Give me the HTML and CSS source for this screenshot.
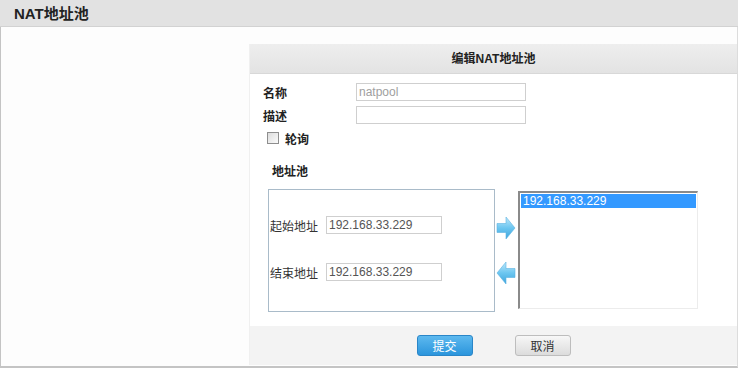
FILE: index.html
```html
<!DOCTYPE html>
<html lang="zh-CN">
<head>
  <meta charset="UTF-8">
  <title>NAT地址池</title>
  <link rel="stylesheet" href="styles.css">
</head>
<body>
  <div class="page-title">NAT地址池</div>
  <div class="content">
    <div class="panel">
      <div class="panel-head">编辑NAT地址池</div>
      <div class="panel-body">
        <div class="row">
          <label class="lbl">名称</label>
          <input class="txt" type="text" value="natpool" readonly>
        </div>
        <div class="row">
          <label class="lbl">描述</label>
          <input class="txt" type="text" value="">
        </div>
        <div class="check-row">
          <span class="checkbox"></span>
          <span class="lbl">轮询</span>
        </div>
        <div class="pool-title">地址池</div>
        <div class="pool">
          <div class="pool-box">
            <div class="pool-row">
              <span class="pool-lbl">起始地址</span>
              <input class="ip" type="text" value="192.168.33.229">
            </div>
            <div class="pool-row">
              <span class="pool-lbl">结束地址</span>
              <input class="ip" type="text" value="192.168.33.229">
            </div>
          </div>
          <div class="arrows">
            <svg class="arrow" width="20" height="24" viewBox="0 0 20 24">
              <defs>
                <linearGradient id="ga" x1="0" y1="0" x2="0" y2="1">
                  <stop offset="0" stop-color="#bfe8fb"/>
                  <stop offset="0.5" stop-color="#6cc6f0"/>
                  <stop offset="1" stop-color="#3ea4dc"/>
                </linearGradient>
              </defs>
              <path d="M1 7.5 H10 V1 L19 12 L10 23 V16.5 H1 Z" fill="url(#ga)" stroke="#5db4e2" stroke-width="0.6"/>
            </svg>
            <svg class="arrow" width="20" height="24" viewBox="0 0 20 24">
              <defs>
                <linearGradient id="gb" x1="0" y1="0" x2="0" y2="1">
                  <stop offset="0" stop-color="#bfe8fb"/>
                  <stop offset="0.5" stop-color="#6cc6f0"/>
                  <stop offset="1" stop-color="#3ea4dc"/>
                </linearGradient>
              </defs>
              <path d="M19 7.5 H10 V1 L1 12 L10 23 V16.5 H19 Z" fill="url(#gb)" stroke="#5db4e2" stroke-width="0.6"/>
            </svg>
          </div>
          <div class="list">
            <div class="list-item selected">192.168.33.229</div>
          </div>
        </div>
      </div>
      <div class="panel-foot">
        <button class="btn btn-primary">提交</button>
        <button class="btn btn-default">取消</button>
      </div>
    </div>
  </div>
</body>
</html>
```

FILE: styles.css
```css
* {
  margin: 0;
  padding: 0;
  box-sizing: border-box;
}
body {
  font-family: "Liberation Sans", "Noto Sans CJK SC", sans-serif;
  font-size: 12px;
  color: #333;
  background-color: #fff;
  width: 738px;
  height: 369px;
  overflow: hidden;
}
.page-title {
  height: 27px;
  line-height: 27px;
  padding-left: 14px;
  font-size: 15px;
  font-weight: bold;
  color: #222;
  background-color: #e2e2e2;
  border-bottom: 1px solid #d2d2d2;
}
.content {
  height: 341px;
  padding: 17px 0 0 248px;
  border-left: 1px solid #c4c4c4;
  border-right: 1px solid #dcdcdc;
  border-bottom: 2px solid #c4c4c4;
  background-color: #fdfdfd;
}
.panel {
  width: 488px;
  border-left: 1px solid #f0f0f0;
}
.panel-head {
  height: 30px;
  line-height: 30px;
  text-align: center;
  font-weight: bold;
  color: #222;
  background: linear-gradient(#eeeeee, #e3e3e3);
  border-bottom: 1px solid #d8d8d8;
}
.panel-body {
  height: 252px;
  padding: 9px 0 0 13px;
  background-color: #fff;
}
.row {
  display: flex;
  align-items: center;
  height: 18px;
  margin-bottom: 5px;
}
.lbl {
  width: 93px;
  font-weight: bold;
  color: #222;
}
.txt {
  width: 170px;
  height: 18px;
  border: 1px solid #cfcfcf;
  padding: 0 2px;
  font-family: inherit;
  font-size: 12px;
  color: #a0a0a0;
  outline: none;
}
.check-row {
  display: flex;
  align-items: center;
  height: 14px;
  margin: 7px 0 0 4px;
}
.checkbox {
  width: 12px;
  height: 12px;
  margin-right: 6px;
  border: 1px solid #8e8e8e;
  background: linear-gradient(135deg, #dcdcdc, #fafafa);
}
.pool-title {
  margin: 20px 0 0 9px;
  font-weight: bold;
  color: #222;
  height: 14px;
  line-height: 14px;
}
.pool {
  display: flex;
  margin: 10px 0 0 5px;
}
.pool-box {
  width: 227px;
  height: 123px;
  border: 1px solid #a9bbc9;
  padding: 26px 0 0 1px;
}
.pool-row {
  display: flex;
  align-items: center;
  height: 18px;
  margin-bottom: 29px;
}
.pool-lbl {
  width: 56px;
  color: #333;
}
.ip {
  width: 116px;
  height: 18px;
  border: 1px solid #cfcfcf;
  padding: 0 2px;
  font-family: inherit;
  font-size: 12px;
  color: #555;
  outline: none;
}
.arrows {
  display: flex;
  flex-direction: column;
  gap: 21px;
  padding: 27px 0 0 1px;
  width: 23px;
}
.list {
  width: 180px;
  height: 118px;
  margin-top: 2px;
  border-top: 2px solid #8a8a8a;
  border-left: 2px solid #8a8a8a;
  border-right: 1px solid #ececec;
  border-bottom: 1px solid #ececec;
  padding: 1px;
  background-color: #fff;
}
.list-item {
  height: 14px;
  line-height: 14px;
  padding-left: 2px;
  font-size: 12px;
}
.list-item.selected {
  background-color: #3399ff;
  color: #fff;
}
.panel-foot {
  height: 39px;
  display: flex;
  align-items: center;
  justify-content: center;
  gap: 42px;
  background-color: #f3f3f3;
}
.btn {
  width: 56px;
  height: 21px;
  border-radius: 3px;
  font-family: inherit;
  font-size: 12px;
  cursor: pointer;
}
.btn-primary {
  color: #fff;
  border: 1px solid #2a86c8;
  background: linear-gradient(#5db9ef, #2b95dc);
}
.btn-default {
  color: #333;
  border: 1px solid #bdbdbd;
  background: linear-gradient(#f7f7f7, #dcdcdc);
}
```
